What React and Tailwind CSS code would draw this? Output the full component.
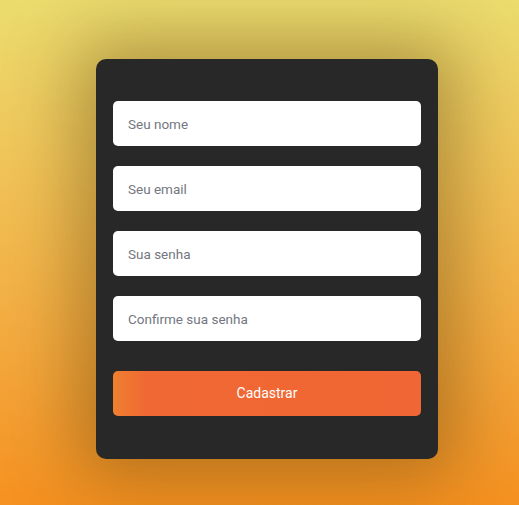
export default function App() {
  const fields = ['Seu nome', 'Seu email', 'Sua senha', 'Confirme sua senha'];

  return (
    <div className="w-[519px] h-[505px] overflow-hidden bg-gradient-to-b from-[#ebdc6e] to-[#f5911f] pl-[96px] pt-[59px] font-['Roboto',sans-serif]">
      <form
        onSubmit={e => e.preventDefault()}
        className="w-[342px] h-[400px] bg-[#282828] rounded-[10px] shadow-[0_0_70px_20px_rgba(60,40,0,0.35)] px-[17px] pt-[42px] flex flex-col"
      >
        <div className="flex flex-col gap-[20px]">
          {fields.map(f => (
            <input
              key={f}
              placeholder={f}
              type={f.includes('senha') ? 'password' : 'text'}
              className="h-[45px] w-full bg-white rounded-[5px] px-[15px] text-[13.5px] text-[#333] placeholder:text-[#747780] outline-none"
            />
          ))}
        </div>
        <button
          type="submit"
          className="mt-[30px] h-[45px] w-full rounded-[5px] bg-[linear-gradient(90deg,#ef8030_0%,#f06833_11%,#f06634_100%)] text-white text-[14px] font-normal"
        >
          Cadastrar
        </button>
      </form>
    </div>
  );
}
